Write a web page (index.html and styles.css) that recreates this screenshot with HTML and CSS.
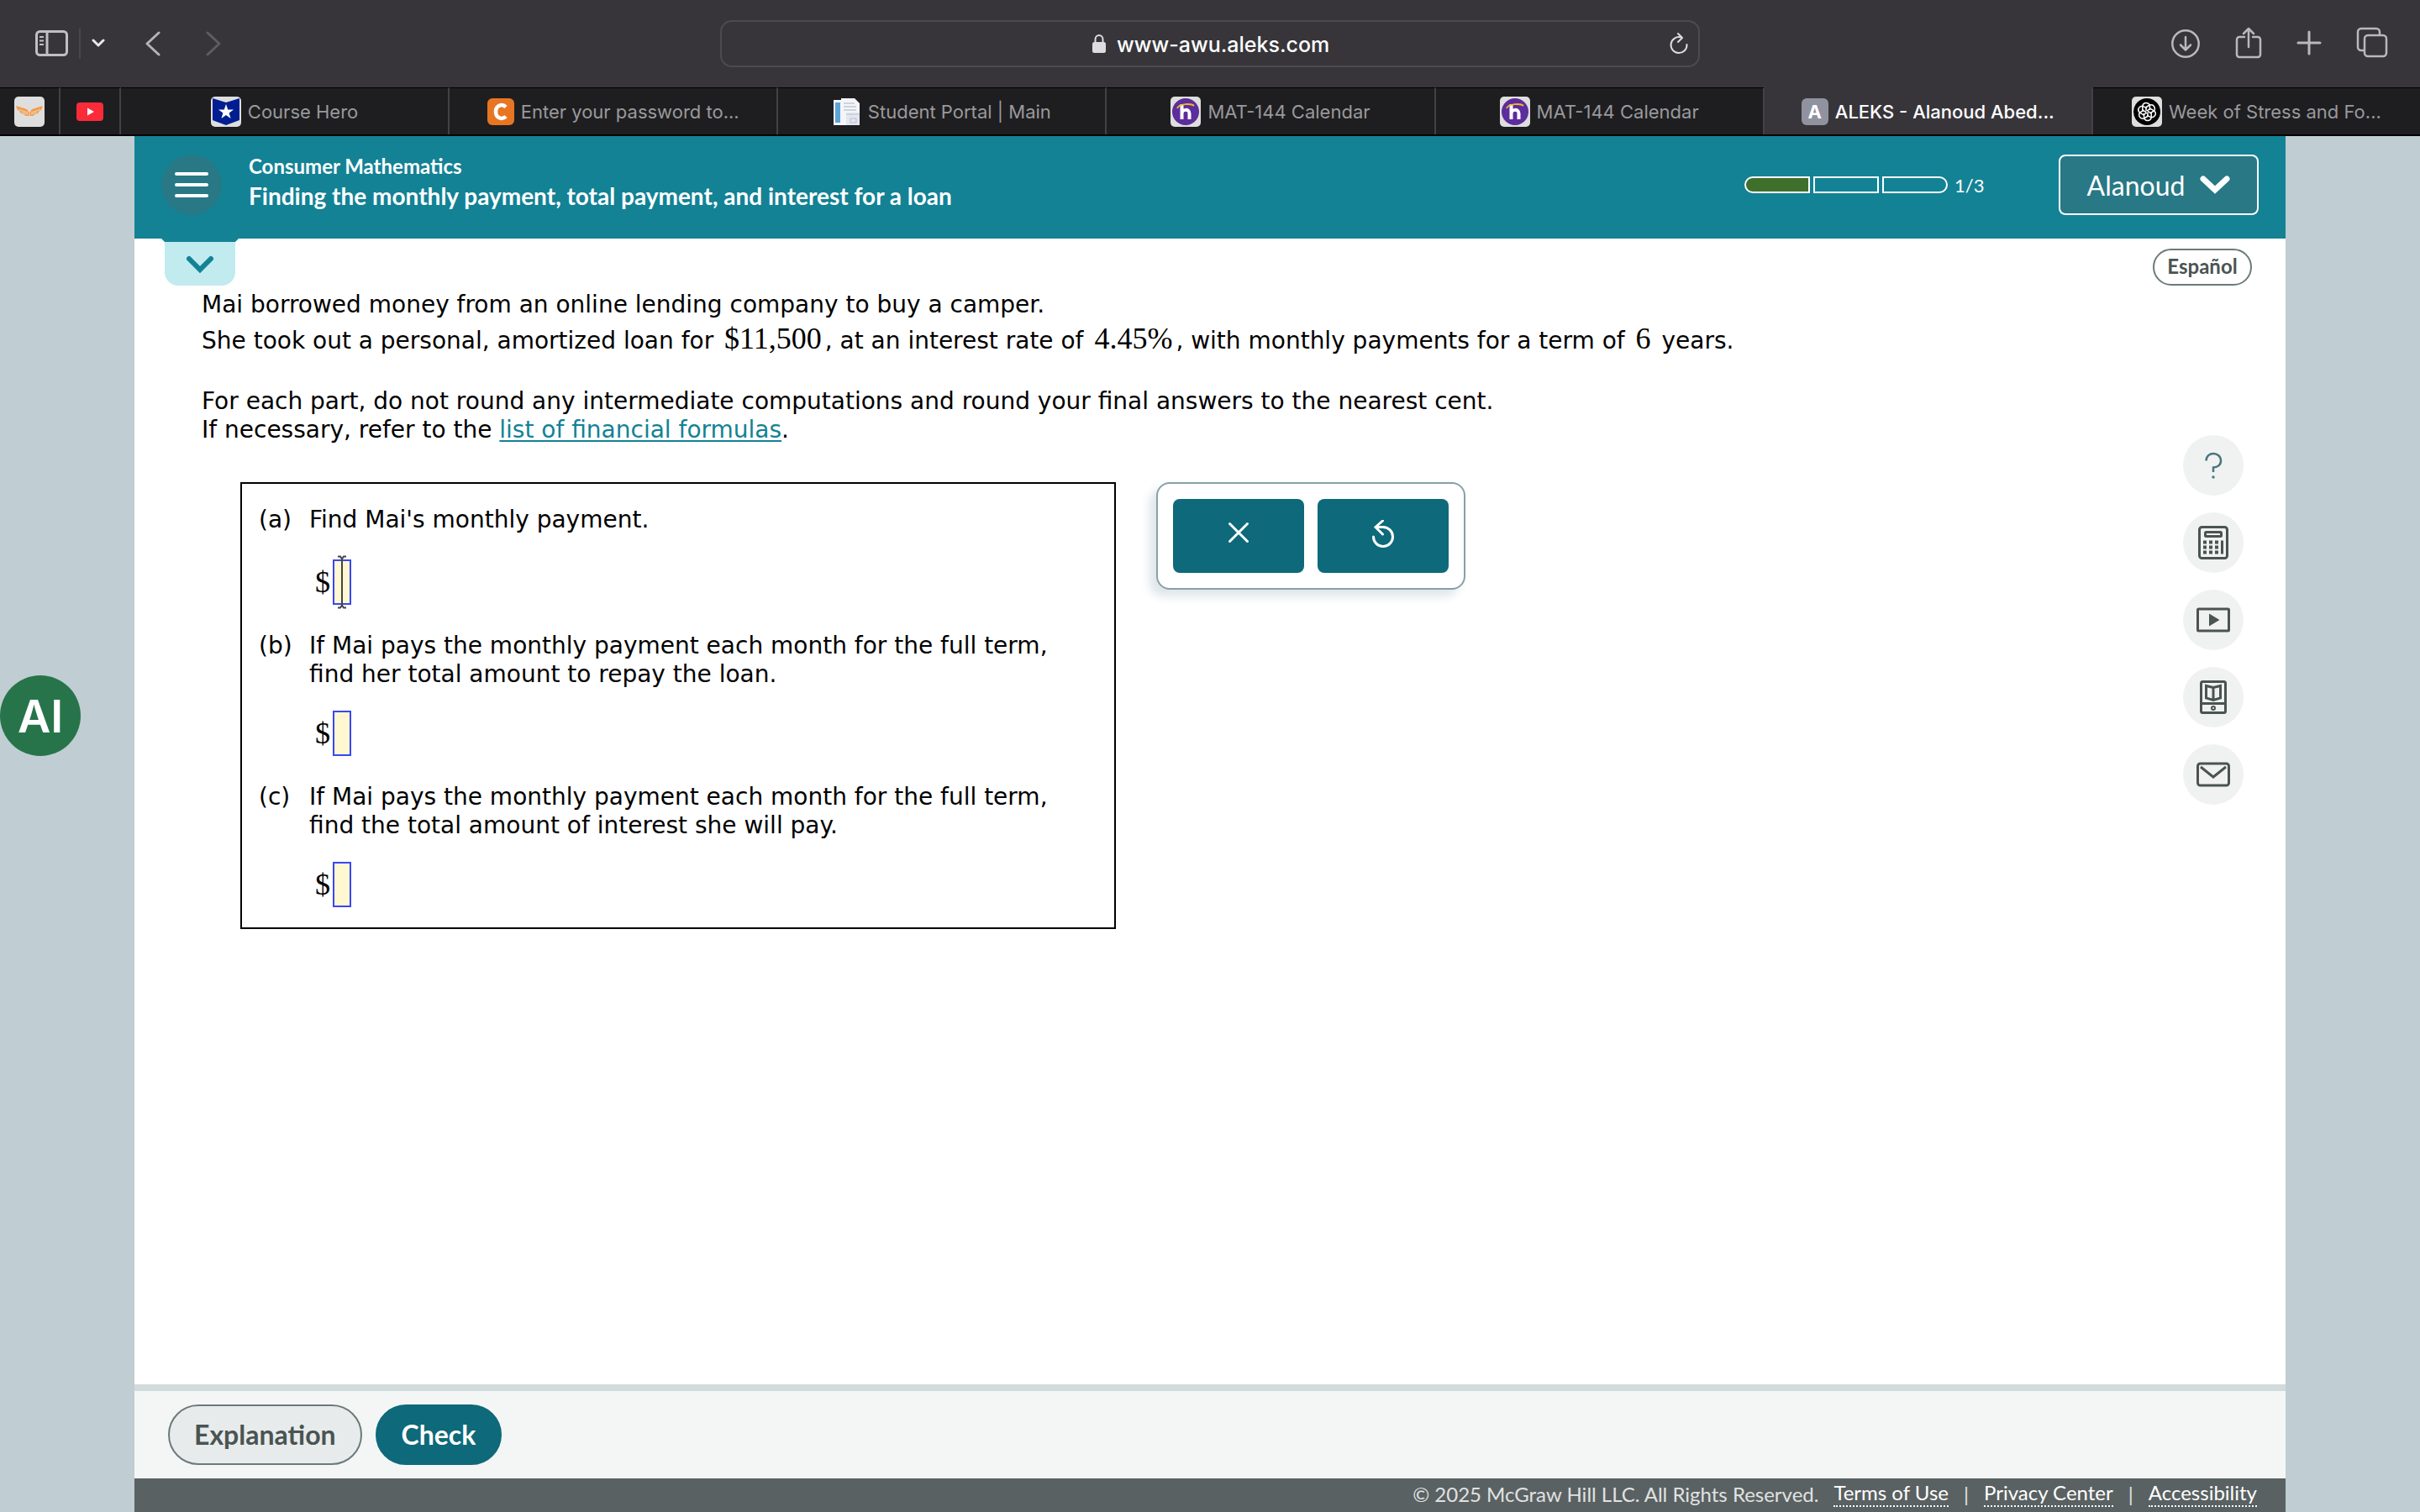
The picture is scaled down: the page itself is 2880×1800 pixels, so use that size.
FILE: index.html
```
<!DOCTYPE html>
<html lang="en">

	<head>
		<meta charset="utf-8">
		<title>ALEKS - Alanoud Abed</title>
		<link rel="stylesheet" href="styles.css">
	</head>

	<body>
		<!-- browser toolbar -->
		<div class="toolbar">
			<div class="tools">
				<button class="tool" aria-label="Sidebar">
					<svg width="40" height="32" viewBox="0 0 40 32" fill="none" stroke="#c0bfc3" stroke-width="3"><rect x="1.500" y="1.500" width="36" height="28" rx="4"/><path d="M14 2v27"/><path d="M5 8h5M5 12.500h5M5 17h5" stroke-width="2"/></svg>
				</button>
				<span class="tool-line"></span>
				<button class="tool" aria-label="Tab groups">
					<svg width="16" height="12" viewBox="0 0 16 12" fill="none" stroke="#e8e7ea" stroke-width="3" stroke-linecap="round" stroke-linejoin="round"><path d="M2 2l6 6 6-6"/></svg>
				</button>
				<button class="tool back" aria-label="Back">
					<svg width="18" height="30" viewBox="0 0 18 30" fill="none" stroke="#b4b3b7" stroke-width="3" stroke-linecap="round" stroke-linejoin="round"><path d="M16 2L2 15l14 13"/></svg>
				</button>
				<button class="tool forward" aria-label="Forward">
					<svg width="18" height="30" viewBox="0 0 18 30" fill="none" stroke="#5d5c60" stroke-width="3" stroke-linecap="round" stroke-linejoin="round"><path d="M2 2l14 13L2 28"/></svg>
				</button>
			</div>

			<div class="address">
				<svg width="18" height="24" viewBox="0 0 18 24"><path d="M4.500 11V7a4.500 5 0 0 1 9 0v4" fill="none" stroke="#dddcdf" stroke-width="2"/><rect x="1" y="10" width="16" height="13" rx="2.500" fill="#dddcdf"/></svg>
				<input class="url" type="text" value="www-awu.aleks.com" aria-label="Address">
				<button class="tool reload" aria-label="Reload">
					<svg width="24" height="28" viewBox="0 0 24 28" fill="none" stroke="#dddcdf" stroke-width="2" stroke-linecap="round" stroke-linejoin="round"><path d="M14.500 6.400A9.500 9.500 0 1 0 21.500 15"/><path d="M11 2l5 5-5 5"/></svg>
				</button>
			</div>

			<div class="tools right">
				<button class="tool" aria-label="Downloads">
					<svg width="36" height="40" viewBox="0 0 36 40" fill="none" stroke="#b9b8bc" stroke-width="2.500" stroke-linecap="round" stroke-linejoin="round"><circle cx="18" cy="20" r="15.700"/><path d="M18 12v15M12 21.500l6 6 6-6"/></svg>
				</button>
				<button class="tool" aria-label="Share">
					<svg width="32" height="40" viewBox="0 0 32 40" fill="none" stroke="#b9b8bc" stroke-width="2.500" stroke-linecap="round" stroke-linejoin="round"><path d="M11 12H5a3 3 0 0 0-3 3v18a3 3 0 0 0 3 3h22a3 3 0 0 0 3-3V15a3 3 0 0 0-3-3h-6"/><path d="M16 24V2M10 8l6-6 6 6"/></svg>
				</button>
				<button class="tool" aria-label="New tab">
					<svg width="30" height="40" viewBox="0 0 30 40" fill="none" stroke="#b9b8bc" stroke-width="3" stroke-linecap="round"><path d="M15 6v26M2 19h26"/></svg>
				</button>
				<button class="tool" aria-label="Tab overview">
					<svg width="38" height="40" viewBox="0 0 38 40" fill="none" stroke="#b9b8bc" stroke-width="2.500"><path d="M10 28H6a4 4 0 0 1-4-4V6a4 4 0 0 1 4-4h18a4 4 0 0 1 4 4v3"/><rect x="10" y="10" width="26" height="25" rx="4"/></svg>
				</button>
			</div>
		</div>

		<div class="tabs">
			<div class="tab pinned">
				<svg width="36" height="36" viewBox="0 0 36 36"><rect width="36" height="36" rx="5" fill="#dedede"/><path d="M2 11l13 4 2 3h2l2-3 13-4-2 5-2 1-2 3-3 1-3 2h-8l-3-2-3-1-2-3-2-1z" fill="#f79a45"/><path d="M5 15.500l11 3.500M9 19l7 2M31 15.500L20 19M27 19l-7 2M18 18v5" stroke="#dedede"/></svg>
			</div>
			<div class="tab pinned">
				<svg width="32" height="36" viewBox="0 0 32 36"><rect y="7" width="32" height="22" rx="4" fill="#fc2b3a"/><path d="M13 13.500v9l8-4.500z" fill="#fff"/></svg>
			</div>
			<div class="tab">
				<svg width="36" height="36" viewBox="0 0 36 36"><rect width="36" height="36" rx="5" fill="#dedede"/><path d="M2 2l16 5 16-5v26l-16 6-16-6z" fill="#001e91"/><path d="M18 9l2.200 6.400h6.800l-5.400 4.100 2 6.500-5.600-3.900-5.600 3.900 2-6.500L9 15.400h6.800z" fill="#fff"/></svg>
				<span>Course Hero</span>
			</div>
			<div class="tab">
				<svg width="32" height="36" viewBox="0 0 32 36"><rect y="2" width="32" height="32" rx="6" fill="#e87522"/><path d="M22 12.500c-4-4.500-12-2.500-12 5.500s8 10 12 5.500" fill="none" stroke="#fff" stroke-width="4.500"/></svg>
				<span>Enter your password to...</span>
			</div>
			<div class="tab">
				<svg width="34" height="36" viewBox="0 0 34 36"><path d="M1 4h12v30H1z" fill="#f2f6fa"/><path d="M3 7h6v24H3z" fill="#5ba3d9"/><path d="M10 2h16l6 6v26H10z" fill="#f4f5f8"/><path d="M13 8h13M13 12h15M13 16h15" stroke="#cdd3dc" stroke-width="2"/><path d="M16 19h16v15H16z" fill="#e2e6ee"/><path d="M16 21h16M21 26h7v5h-7z" fill="none" stroke="#b9c2d0"/></svg>
				<span>Student Portal | Main</span>
			</div>
			<div class="tab">
				<svg width="36" height="36" viewBox="0 0 36 36"><rect width="36" height="36" rx="5" fill="#dedede"/><circle cx="18" cy="18" r="16" fill="#5c2d9c"/><path d="M13.500 9v18M13.500 20c0-5 9-6 9 0v7" fill="none" stroke="#fff" stroke-width="4"/><path d="M8 14c2-6 17-6 20-3" fill="none" stroke="#f0b62e" stroke-width="2"/></svg>
				<span>MAT-144 Calendar</span>
			</div>
			<div class="tab">
				<svg width="36" height="36" viewBox="0 0 36 36"><rect width="36" height="36" rx="5" fill="#dedede"/><circle cx="18" cy="18" r="16" fill="#5c2d9c"/><path d="M13.500 9v18M13.500 20c0-5 9-6 9 0v7" fill="none" stroke="#fff" stroke-width="4"/><path d="M8 14c2-6 17-6 20-3" fill="none" stroke="#f0b62e" stroke-width="2"/></svg>
				<span>MAT-144 Calendar</span>
			</div>
			<div class="tab active">
				<b class="letter">A</b>
				<span>ALEKS - Alanoud Abed...</span>
			</div>
			<div class="tab">
				<svg width="36" height="36" viewBox="0 0 36 36" fill="none" stroke="#fff" stroke-width="1.500"><rect width="36" height="36" rx="5" fill="#dedede" stroke="none"/><circle cx="18" cy="18" r="16" fill="#000" stroke="none"/><path d="M17 17.500v-5l4.500-2.500c5-1.500 7 4 5 7l-5 3"/><path d="M17 17.500v-5l4.500-2.500c5-1.500 7 4 5 7l-5 3" transform="rotate(60 18 18)"/><path d="M17 17.500v-5l4.500-2.500c5-1.500 7 4 5 7l-5 3" transform="rotate(120 18 18)"/><path d="M17 17.500v-5l4.500-2.500c5-1.500 7 4 5 7l-5 3" transform="rotate(180 18 18)"/><path d="M17 17.500v-5l4.500-2.500c5-1.500 7 4 5 7l-5 3" transform="rotate(240 18 18)"/><path d="M17 17.500v-5l4.500-2.500c5-1.500 7 4 5 7l-5 3" transform="rotate(300 18 18)"/></svg>
				<span>Week of Stress and Fo...</span>
			</div>
		</div>

		<!-- ALEKS page -->
		<div class="page">
			<header class="header">
				<button class="menu" aria-label="Menu">
					<svg width="40" height="32" viewBox="0 0 40 32" stroke="#fff" stroke-width="4" stroke-linecap="round"><path d="M2 3h36M2 16h36M2 29h36"/></svg>
				</button>
				<div class="titles">
					<div class="course">Consumer Mathematics</div>
					<h1 class="topic">Finding the monthly payment, total payment, and interest for a loan</h1>
				</div>
				<div class="progress">
					<span class="step done"></span>
					<span class="step"></span>
					<span class="step"></span>
				</div>
				<span class="count">1/3</span>
				<button class="user">Alanoud
					<svg width="36" height="24" viewBox="0 0 36 24" fill="none" stroke="#fff" stroke-width="7" stroke-linecap="round"><path d="M4 5l14 13L32 5"/></svg>
				</button>
			</header>

			<main class="main">
				<button class="drawer" aria-label="Show more">
					<svg width="92" height="56" viewBox="0 0 92 56"><path d="M4 4h84v36a16 16 0 0 1-16 16H20A16 16 0 0 1 4 40z" fill="#c1ebee"/><path d="M0 0h92l-4 4H4z" fill="#138295"/><path d="M33 24l13 13 13-13" fill="none" stroke="#138295" stroke-width="6" stroke-linecap="round"/></svg>
				</button>
				<button class="language">Español</button>

				<div class="problem">
					<p>Mai borrowed money from an online lending company to buy a camper.</p>
					<p class="tall">She took out a personal, amortized loan for <span class="math">$11,500</span>, at an interest rate of <span class="math">4.45%</span>, with monthly payments for a term of <span class="math">6</span> years.</p>
					<p class="second">For each part, do not round any intermediate computations and round your final answers to the nearest cent.</p>
					<p>If necessary, refer to the <a href="#">list of financial formulas</a>.</p>

					<div class="work">
						<div class="parts">
							<div class="part">
								<span>(a)</span>
								<label for="ansA">Find Mai's monthly payment.</label>
								<div class="answer">
									<span class="dollar">$</span><input id="ansA" type="text">
									<svg class="caret" width="12" height="64" viewBox="0 0 12 64" fill="none" stroke="#444" stroke-width="2"><path d="M1 1.500h3l2 3v55l-2 3H1M11 1.500H8l-2 3M11 62.500H8l-2-3"/></svg>
								</div>
							</div>
							<div class="part">
								<span>(b)</span>
								<label for="ansB">If Mai pays the monthly payment each month for the full term,<br>find her total amount to repay the loan.</label>
								<div class="answer">
									<span class="dollar">$</span><input id="ansB" type="text">
								</div>
							</div>
							<div class="part">
								<span>(c)</span>
								<label for="ansC">If Mai pays the monthly payment each month for the full term,<br>find the total amount of interest she will pay.</label>
								<div class="answer">
									<span class="dollar">$</span><input id="ansC" type="text">
								</div>
							</div>
						</div>

						<div class="keypad">
							<button class="key" aria-label="Clear">
								<svg width="28" height="36" viewBox="0 0 28 36" fill="none" stroke="#fff" stroke-width="3" stroke-linecap="round"><path d="M3.500 4.500l21 21M24.500 4.500l-21 21"/></svg>
							</button>
							<button class="key" aria-label="Undo">
								<svg width="28" height="36" viewBox="0 0 28 36" fill="none" stroke="#fff" stroke-width="3" stroke-linecap="round" stroke-linejoin="round"><path d="M2.500 20A11.500 11.500 0 1 0 14 8.500H5"/><path d="M13.500 1L5 8.500l8.500 8.500"/></svg>
							</button>
						</div>
					</div>
				</div>

				<nav class="helpers">
					<button class="helper" aria-label="Help">
						<svg width="40" height="40" viewBox="0 0 40 40" fill="none" stroke="#4a7482" stroke-width="2.500"><path d="M11.500 14.500c0-11.500 17.500-11 17.500 0 0 5-4 8-9 8V28"/><circle cx="20" cy="34" r="1.700" fill="#4a7482" stroke="none"/></svg>
					</button>
					<button class="helper" aria-label="Calculator">
						<svg width="40" height="40" viewBox="0 0 40 40" fill="none" stroke="#4a5452" stroke-width="3"><rect x="3.500" y="1.500" width="33" height="37" rx="3"/><rect x="10.500" y="7.500" width="19" height="5" rx="1"/><path d="M8 19.500h19M8 25.500h19M8 31.500h19" stroke-width="4" stroke-dasharray="4 3"/><path d="M30.500 17.500v16"/></svg>
					</button>
					<button class="helper" aria-label="Video">
						<svg width="40" height="40" viewBox="0 0 40 40" fill="none" stroke="#4a5452" stroke-width="3"><rect x="1.500" y="7" width="37" height="26" rx="1"/><path d="M15 12.500v15L27.500 20z" fill="#4a5452" stroke="none"/></svg>
					</button>
					<button class="helper" aria-label="Textbook">
						<svg width="40" height="40" viewBox="0 0 40 40" fill="none" stroke="#4a5452" stroke-width="3"><rect x="5.500" y="1.500" width="29" height="37" rx="2"/><path d="M5 27.500h30M20 8.500v15M20 8.500L11.500 6.500v14.500L20 23.500l8.500-2.500V6.500z"/><circle cx="20" cy="33" r="2" stroke-width="2"/></svg>
					</button>
					<button class="helper" aria-label="Message">
						<svg width="40" height="40" viewBox="0 0 40 40" fill="none" stroke="#4a5452" stroke-width="3"><rect x="1.500" y="7" width="37" height="26" rx="3"/><path d="M5 11l15 12 15-12"/></svg>
					</button>
				</nav>
			</main>

			<div class="actions">
				<button class="action">Explanation</button>
				<button class="action check">Check</button>
			</div>

			<footer class="footer">
				<span class="copy">© 2025 McGraw Hill LLC. All Rights Reserved.</span>
				<a href="#">Terms of Use</a>
				<span>|</span>
				<a href="#">Privacy Center</a>
				<span>|</span>
				<a href="#">Accessibility</a>
			</footer>
		</div>

		<button class="ai">AI</button>
	</body>

</html>
```

FILE: styles.css
```
* {
	box-sizing: border-box;
}

body {
	margin: 0;
	height: 100vh;
	display: flex;
	flex-direction: column;
	background-color: #c0cdd3;
	font-family: Lato, "Open Sans", sans-serif;
}

button {
	border: none;
	padding: 0;
	background: none;
	font-family: inherit;
	cursor: pointer;
}

svg {
	display: block;
	flex: none;
}

p, h1 {
	margin: 0;
}

/* browser toolbar */

.toolbar {
	height: 104px;
	flex: none;
	display: grid;
	grid-template-columns: 1fr 1166px 1fr;
	align-items: center;
	background-color: #37353a;
	font-family: Inter, sans-serif;
}

.tools {
	display: flex;
	align-items: center;
	padding: 0 38px 0 42px;
}

.tools.right {
	justify-content: flex-end;
	gap: 41px;
}

.tool-line {
	width: 2px;
	height: 36px;
	margin: 0 13px 0 12px;
	background-color: #49474c;
}

.back {
	margin-left: 48px;
}

.forward {
	margin-left: 54px;
}

.address {
	height: 56px;
	position: relative;
	display: flex;
	align-items: center;
	justify-content: center;
	gap: 12px;
	border: 2px solid #4d4b51;
	border-radius: 14px;
}

.url {
	width: 252px;
	padding: 2px 0 0;
	border: none;
	background: none;
	color: #fff;
	font-family: inherit;
	font-size: 25px;
	font-weight: 500;
	line-height: 32px;
}

.reload {
	position: absolute;
	right: 11px;
}

.tabs {
	height: 58px;
	flex: none;
	display: flex;
	border-bottom: 2px solid #000;
	background-color: #1e1e20;
	font-family: Inter, sans-serif;
}

.tab {
	flex: 1;
	min-width: 0;
	display: flex;
	align-items: center;
	justify-content: center;
	gap: 8px;
	border-top: 1px solid #000;
	border-right: 2px solid #424144;
	color: #9a999c;
	font-size: 22px;
	white-space: nowrap;
}

.tab.pinned {
	flex: none;
	width: 72px;
}

.tab:last-child {
	border-right: none;
}

.tab.active {
	border-top-color: #37353a;
	background-color: #37353a;
	color: #fff;
	font-weight: 500;
}

.letter {
	width: 32px;
	height: 32px;
	border-radius: 6px;
	background-color: #9192a0;
	font-size: 22px;
	line-height: 32px;
	text-align: center;
}

/* ALEKS page */

.page {
	flex: 1;
	min-height: 0;
	margin: 0 160px;
	display: flex;
	flex-direction: column;
	background-color: #fff;
}

.header {
	height: 122px;
	flex: none;
	display: flex;
	align-items: center;
	padding: 0 32px 6px;
	background-color: #138295;
	color: #fff;
}

.menu {
	width: 72px;
	height: 72px;
	display: flex;
	align-items: center;
	justify-content: center;
	border-radius: 50%;
	background-color: #287886;
}

.titles {
	flex: 1;
	margin-left: 32px;
	padding-bottom: 8px;
	font-weight: bold;
}

.course {
	font-size: 24px;
	line-height: 34px;
}

.topic {
	font-size: 28px;
	line-height: 36px;
}

.progress {
	display: flex;
	gap: 4px;
}

.step {
	width: 78px;
	height: 20px;
	border: 2px solid #fff;
}

.step:first-child {
	border-radius: 10px 0 0 10px;
}

.step:last-child {
	border-radius: 0 10px 10px 0;
}

.step.done {
	background-color: #3e702c;
}

.count {
	width: 132px;
	padding-left: 8px;
	font-size: 22px;
}

.user {
	width: 238px;
	height: 72px;
	display: flex;
	align-items: center;
	justify-content: center;
	gap: 18px;
	border: 2px solid #fff;
	border-radius: 8px;
	background-color: #287886;
	color: #fff;
	font-size: 32px;
}

.main {
	flex: 1;
	min-height: 0;
	position: relative;
	padding: 62px 80px 0;
}

.drawer {
	position: absolute;
	top: 0;
	left: 32px;
}

.language {
	position: absolute;
	top: 12px;
	right: 40px;
	width: 118px;
	height: 44px;
	padding-bottom: 4px;
	border: 2px solid #6b7a7a;
	border-radius: 22px;
	color: #4a5452;
	font-size: 24px;
	font-weight: bold;
}

.problem {
	color: #000;
	font-family: Verdana, "DejaVu Sans", sans-serif;
	font-size: 28px;
	line-height: 34px;
}

.problem a {
	color: #138295;
	text-underline-offset: 3px;
}

.tall {
	line-height: 46px;
}

.second {
	margin-top: 32px;
}

.math,
.dollar {
	font-family: "Liberation Serif", serif;
	font-size: 36px;
}

.math {
	padding: 0 4px;
}

.work {
	display: flex;
	align-items: flex-start;
	gap: 48px;
	margin: 45px 0 0 46px;
}

.parts {
	width: 1042px;
	border: 2px solid #000;
	padding: 26px 20px 0;
}

/* label letter | question, answer under the question */
.part {
	display: grid;
	grid-template-columns: 60px 1fr;
	row-gap: 23px;
	margin-bottom: 29px;
}

.part:last-child {
	margin-bottom: 21px;
}

.part label {
	min-height: 38px;
}

.answer {
	grid-column: 2;
	position: relative;
	display: flex;
	align-items: center;
	gap: 3px;
	height: 60px;
	padding-left: 7px;
}

.answer input {
	width: 22px;
	height: 54px;
	padding: 0;
	border: 2px solid #3a46f5;
	background-color: #fff8d0;
	font-family: "Liberation Serif", serif;
	font-size: 36px;
}

.caret {
	position: absolute;
	top: -2px;
	left: 33px;
}

.keypad {
	display: flex;
	gap: 16px;
	padding: 18px;
	border: 2px solid #85a1a8;
	border-radius: 16px;
	box-shadow: -8px 8px 12px #dfe5e8;
}

.key {
	width: 156px;
	height: 88px;
	display: flex;
	align-items: center;
	justify-content: center;
	padding-bottom: 2px;
	border-radius: 8px;
	background-color: #0e697a;
}

.helpers {
	position: absolute;
	top: 234px;
	right: 50px;
	display: flex;
	flex-direction: column;
	gap: 20px;
}

.helper {
	width: 72px;
	height: 72px;
	display: flex;
	align-items: center;
	justify-content: center;
	border-radius: 50%;
	background-color: #f0f2f1;
}

.actions {
	height: 112px;
	flex: none;
	display: flex;
	gap: 16px;
	padding: 16px 40px;
	border-top: 8px solid #d2dbdc;
	background-color: #f4f6f5;
}

.action {
	height: 72px;
	padding: 0 29px 2px;
	border: 2px solid #6b7a7a;
	border-radius: 36px;
	background-color: #e8ebec;
	color: #4a5452;
	font-size: 32px;
	font-weight: bold;
}

.action.check {
	border-color: #0e697a;
	background-color: #0e697a;
	color: #fff;
}

.footer {
	height: 40px;
	flex: none;
	display: flex;
	align-items: center;
	justify-content: flex-end;
	gap: 18px;
	padding: 0 34px 4px;
	background-color: #5a6162;
	color: #e0e2e2;
	font-size: 24px;
}

.footer a {
	color: #fff;
	line-height: 30px;
	text-decoration: none;
	border-bottom: 2px dotted #fff;
}

.ai {
	position: absolute;
	top: 804px;
	left: 0;
	width: 96px;
	height: 96px;
	border-radius: 50%;
	background-color: #27744a;
	color: #fff;
	font-family: Inter, sans-serif;
	font-size: 54px;
	font-weight: 600;
}
```
